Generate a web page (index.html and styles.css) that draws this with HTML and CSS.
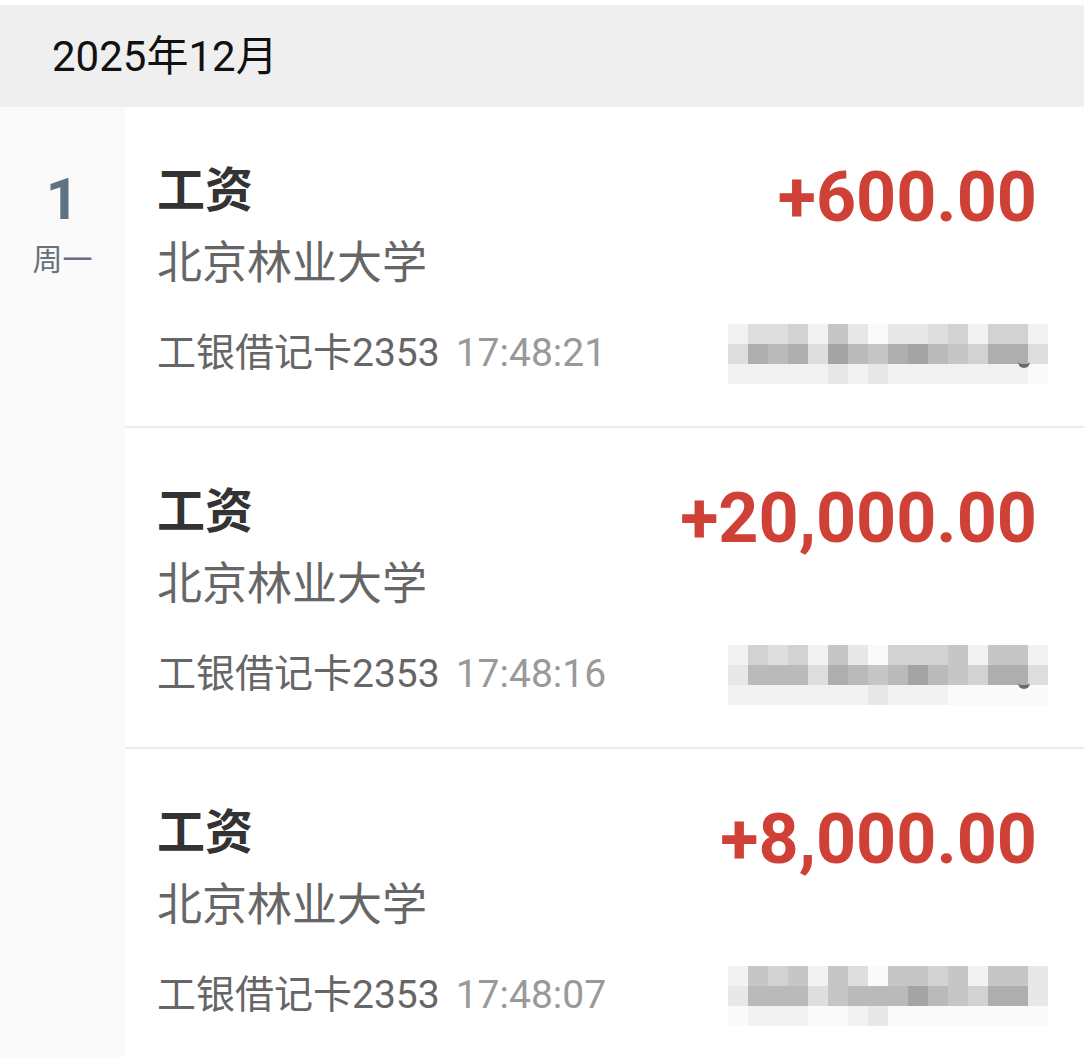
FILE: index.html
```html
<!DOCTYPE html>
<html lang="zh-CN">
<head>
<meta charset="utf-8">
<title>账单</title>
<link rel="stylesheet" href="styles.css">
</head>
<body>
<div class="page">
  <div class="month">2025年12月</div>
  <div class="group">
    <div class="day">
      <div class="day-num">1</div>
      <div class="day-week">周一</div>
    </div>
    <div class="list">
      <div class="item">
        <div class="info">
          <div class="title">工资</div>
          <div class="sub">北京林业大学</div>
          <div class="meta">工银借记卡2353<span class="time">17:48:21</span></div>
        </div>
        <div class="side">
          <div class="amount">+600.00</div>
          <div class="mosaic curl">
            <span class="l1"></span><span class="l3"></span><span class="l3"></span><span class="l4"></span><span class="l1"></span><span class="l5"></span><span class="l2"></span><span class="l0"></span><span class="l2"></span><span class="l2"></span><span class="l3"></span><span class="l4"></span><span class="l1"></span><span class="l4"></span><span class="l4"></span><span class="l1"></span>
            <span class="l3"></span><span class="l7"></span><span class="l6"></span><span class="l7"></span><span class="l3"></span><span class="l8"></span><span class="l6"></span><span class="l5"></span><span class="l7"></span><span class="l8"></span><span class="l6"></span><span class="l5"></span><span class="l4"></span><span class="l7"></span><span class="l7"></span><span class="l3"></span>
            <span class="l1"></span><span class="l1"></span><span class="l1"></span><span class="l1"></span><span class="l1"></span><span class="l2"></span><span class="l1"></span><span class="l2"></span><span class="l1"></span><span class="l1"></span><span class="l1"></span><span class="l1"></span><span class="l1"></span><span class="l1"></span><span class="l1"></span><span class="l0"></span>
          </div>
        </div>
      </div>
      <div class="item">
        <div class="info">
          <div class="title">工资</div>
          <div class="sub">北京林业大学</div>
          <div class="meta">工银借记卡2353<span class="time">17:48:16</span></div>
        </div>
        <div class="side">
          <div class="amount">+20,000.00</div>
          <div class="mosaic curl">
            <span class="l1"></span><span class="l4"></span><span class="l3"></span><span class="l4"></span><span class="l1"></span><span class="l5"></span><span class="l2"></span><span class="l0"></span><span class="l4"></span><span class="l4"></span><span class="l4"></span><span class="l5"></span><span class="l1"></span><span class="l5"></span><span class="l5"></span><span class="l1"></span>
            <span class="l2"></span><span class="l6"></span><span class="l6"></span><span class="l6"></span><span class="l3"></span><span class="l7"></span><span class="l6"></span><span class="l5"></span><span class="l6"></span><span class="l8"></span><span class="l6"></span><span class="l5"></span><span class="l4"></span><span class="l7"></span><span class="l7"></span><span class="l3"></span>
            <span class="l1"></span><span class="l1"></span><span class="l1"></span><span class="l1"></span><span class="l1"></span><span class="l1"></span><span class="l1"></span><span class="l2"></span><span class="l1"></span><span class="l1"></span><span class="l1"></span><span class="l0"></span><span class="l0"></span><span class="l0"></span><span class="l0"></span><span class="l0"></span>
          </div>
        </div>
      </div>
      <div class="item">
        <div class="info">
          <div class="title">工资</div>
          <div class="sub">北京林业大学</div>
          <div class="meta">工银借记卡2353<span class="time">17:48:07</span></div>
        </div>
        <div class="side">
          <div class="amount">+8,000.00</div>
          <div class="mosaic">
            <span class="l1"></span><span class="l5"></span><span class="l4"></span><span class="l5"></span><span class="l1"></span><span class="l5"></span><span class="l3"></span><span class="l0"></span><span class="l5"></span><span class="l5"></span><span class="l4"></span><span class="l5"></span><span class="l1"></span><span class="l5"></span><span class="l5"></span><span class="l2"></span>
            <span class="l2"></span><span class="l6"></span><span class="l6"></span><span class="l6"></span><span class="l3"></span><span class="l5"></span><span class="l6"></span><span class="l6"></span><span class="l6"></span><span class="l8"></span><span class="l6"></span><span class="l5"></span><span class="l4"></span><span class="l7"></span><span class="l7"></span><span class="l2"></span>
            <span class="l0"></span><span class="l1"></span><span class="l1"></span><span class="l1"></span><span class="l0"></span><span class="l0"></span><span class="l1"></span><span class="l2"></span><span class="l0"></span><span class="l0"></span><span class="l0"></span><span class="l0"></span><span class="l0"></span><span class="l0"></span><span class="l0"></span><span class="l0"></span>
          </div>
        </div>
      </div>
    </div>
  </div>
</div>
</body>
</html>
```

FILE: styles.css
```css
html, body {
  margin: 0;
  padding: 0;
  background: #ffffff;
}

body {
  font-family: Roboto, "Noto Sans CJK SC", sans-serif;
  overflow: hidden;
  height: 1057px;
}

.page {
  padding-top: 5px;
}

.month {
  background: #efefef;
  font-size: 42px;
  line-height: 44px;
  height: 44px;
  color: #111111;
  padding: 30px 0 28px 52px;
}

.group {
  display: flex;
}

.day {
  width: 125px;
  flex: none;
  background: #fafafa;
  text-align: center;
  padding-top: 63px;
  min-height: 1000px;
}

.day-num {
  font-size: 58px;
  line-height: 58px;
  height: 58px;
  font-weight: 700;
  color: #5f7383;
}

.day-week {
  margin-top: 14px;
  font-size: 30px;
  line-height: 30px;
  color: #68717b;
  font-family: "Noto Sans CJK SC", sans-serif;
}

.list {
  flex: 1;
}

.item {
  display: flex;
  justify-content: space-between;
  padding: 55px 47px 42px 32px;
  border-bottom: 2px solid #ececec;
}

.title {
  font-family: "Noto Sans CJK SC", sans-serif;
  font-size: 48px;
  line-height: 48px;
  height: 48px;
  font-weight: 700;
  color: #333333;
}

.sub {
  font-family: "Noto Sans CJK SC", sans-serif;
  margin-top: 27px;
  font-size: 45px;
  line-height: 45px;
  height: 45px;
  color: #666666;
}

.meta {
  margin-top: 52px;
  font-size: 39px;
  line-height: 39px;
  height: 39px;
  color: #666666;
  white-space: nowrap;
}

.time {
  margin-left: 16px;
  color: #999999;
}

.side {
  display: flex;
  flex-direction: column;
  align-items: flex-end;
}

.amount {
  font-size: 70px;
  line-height: 70px;
  height: 70px;
  font-weight: 700;
  color: #cf4037;
  white-space: nowrap;
}

.mosaic {
  position: relative;
  margin-top: 92px;
  margin-right: -11px;
  display: grid;
  grid-template-columns: repeat(16, 20px);
  grid-template-rows: repeat(3, 20px);
}

.mosaic span {
  display: block;
}

.curl::after {
  content: "";
  position: absolute;
  right: 18px;
  top: 34px;
  width: 12px;
  height: 10px;
  border-bottom: 4px solid #6a6a6a;
  border-radius: 0 0 10px 10px;
  box-sizing: border-box;
}

.l0 { background: #fafafa; }
.l1 { background: #f2f2f2; }
.l2 { background: #e8e8e8; }
.l3 { background: #dedede; }
.l4 { background: #d2d2d2; }
.l5 { background: #c6c6c6; }
.l6 { background: #bababa; }
.l7 { background: #aeaeae; }
.l8 { background: #a4a4a4; }
```
